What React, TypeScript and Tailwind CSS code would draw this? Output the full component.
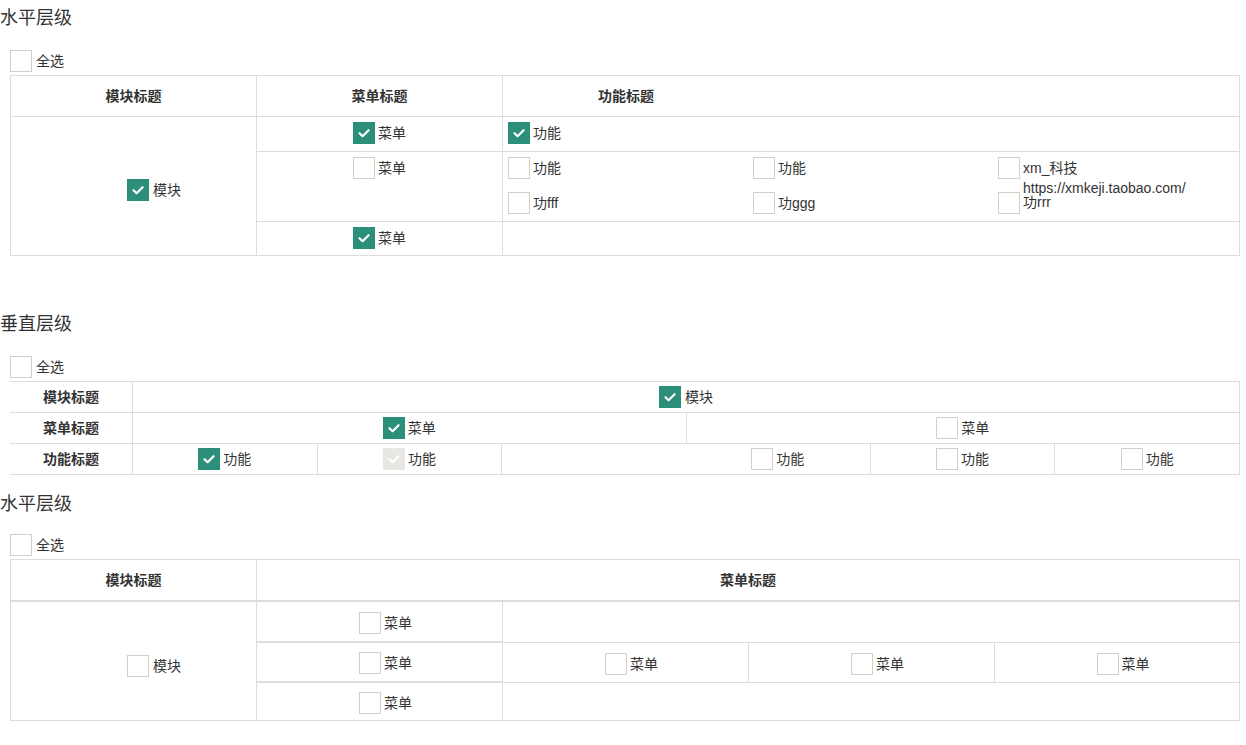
import React from "react";

type CheckState = "on" | "off" | "disabled";

const Box: React.FC<{ state: CheckState }> = ({ state }) => {
	if (state === "off") {
		return <span className="block w-[22px] h-[22px] shrink-0 border border-[#d3cec6] bg-white" />;
	}
	return (
		<span
			className={
				state === "on"
					? "flex items-center justify-center w-[22px] h-[22px] shrink-0 bg-[#2c8f7a]"
					: "flex items-center justify-center w-[22px] h-[22px] shrink-0 bg-[#e9e7e3]"
			}
		>
			<svg width="22" height="22" viewBox="0 0 22 22" fill="none">
				<polyline
					points="6.5,11.2 9.6,14.2 15.6,8.2"
					stroke="#ffffff"
					strokeWidth="2.2"
					strokeLinecap="round"
					strokeLinejoin="round"
				/>
			</svg>
		</span>
	);
};

const Check: React.FC<{ state?: CheckState; label: React.ReactNode; gap?: string }> = ({
	state = "off",
	label,
	gap = "gap-[3px]",
}) => (
	<label className={`flex items-center ${gap}`}>
		<Box state={state} />
		<span className="leading-[22px] whitespace-nowrap">{label}</span>
	</label>
);

const Title: React.FC<{ text: string; className?: string }> = ({ text, className = "" }) => (
	<div className={`h-[36px] flex items-center text-[18px] text-[#333] ${className}`}>{text}</div>
);

const SelectAll: React.FC<{ className?: string }> = ({ className = "" }) => (
	<div className={`pl-[10px] h-[22px] flex ${className}`}>
		<Check label="全选" gap="gap-[4px]" />
	</div>
);

// 水平层级：模块 / 菜单 / 功能
const HorizontalTable: React.FC = () => (
	<div className="ml-[10px] mt-[3px] w-[1230px] border border-[#ddd]">
		<div className="flex h-[41px] border-b border-[#ddd] font-bold">
			<div className="w-[246px] border-r border-[#ddd] flex items-center justify-center">模块标题</div>
			<div className="w-[246px] border-r border-[#ddd] flex items-center justify-center">菜单标题</div>
			<div className="w-[246px] flex items-center justify-center">功能标题</div>
		</div>
		<div className="flex">
			<div className="w-[246px] border-r border-[#ddd] flex items-center pl-[116px] pt-[8px]">
				<Check state="on" label="模块" gap="gap-[4px]" />
			</div>
			<div className="flex-1 flex flex-col">
				<div className="flex h-[35px] border-b border-[#ddd]">
					<div className="w-[246px] border-r border-[#ddd] flex items-start justify-center pt-[5px]">
						<Check state="on" label="菜单" />
					</div>
					<div className="flex-1 flex items-start pl-[5px] pt-[5px]">
						<Check state="on" label="功能" />
					</div>
				</div>
				<div className="flex h-[70px] border-b border-[#ddd]">
					<div className="w-[246px] border-r border-[#ddd] flex items-start justify-center pt-[5px]">
						<Check label="菜单" />
					</div>
					<div className="flex-1 grid grid-cols-[245px_245px_245px] auto-rows-[35px]">
						<div className="flex items-start pl-[5px] pt-[5px]"><Check label="功能" /></div>
						<div className="flex items-start pl-[5px] pt-[5px]"><Check label="功能" /></div>
						<div className="flex items-start pl-[5px] pt-[5px]"><Check label="xm_科技" /></div>
						<div className="flex items-start pl-[5px] pt-[5px]"><Check label="功fff" /></div>
						<div className="flex items-start pl-[5px] pt-[5px]"><Check label="功ggg" /></div>
						<div className="pl-[5px] pt-[5px] flex items-start gap-[3px]">
							<Box state="off" />
							<span className="-mt-[11px] leading-[14px]">
								https://xmkeji.taobao.com/
								<br />
								功rrr
							</span>
						</div>
					</div>
				</div>
				<div className="flex h-[33px]">
					<div className="w-[246px] border-r border-[#ddd] flex items-start justify-center pt-[5px]">
						<Check state="on" label="菜单" />
					</div>
					<div className="flex-1" />
				</div>
			</div>
		</div>
	</div>
);

const Cell: React.FC<{ children?: React.ReactNode; border?: boolean }> = ({ children, border = true }) => (
	<div className={`flex-1 flex items-center justify-center ${border ? "border-r border-[#ddd]" : ""}`}>
		{children}
	</div>
);

// 垂直层级：每一级一行
const VerticalTable: React.FC = () => (
	<div className="ml-[10px] mt-[3px] w-[1230px] border-t border-r border-[#ddd]">
		<div className="flex h-[31px] border-b border-[#ddd]">
			<div className="w-[123px] border-r border-[#ddd] flex items-center justify-center font-bold">模块标题</div>
			<Cell border={false}>
				<Check state="on" label="模块" gap="gap-[4px]" />
			</Cell>
		</div>
		<div className="flex h-[31px] border-b border-[#ddd]">
			<div className="w-[123px] border-r border-[#ddd] flex items-center justify-center font-bold">菜单标题</div>
			<Cell>
				<Check state="on" label="菜单" />
			</Cell>
			<Cell border={false}>
				<Check label="菜单" />
			</Cell>
		</div>
		<div className="flex h-[31px] border-b border-[#ddd]">
			<div className="w-[123px] border-r border-[#ddd] flex items-center justify-center font-bold">功能标题</div>
			<Cell>
				<Check state="on" label="功能" />
			</Cell>
			<Cell>
				<Check state="disabled" label="功能" />
			</Cell>
			<Cell border={false} />
			<Cell>
				<Check label="功能" />
			</Cell>
			<Cell>
				<Check label="功能" />
			</Cell>
			<Cell border={false}>
				<Check label="功能" />
			</Cell>
		</div>
	</div>
);

// 水平层级：模块 / 菜单（菜单横向展开）
const MenuTable: React.FC = () => (
	<div className="ml-[10px] mt-[3px] w-[1230px] border border-[#ddd]">
		<div className="flex h-[42px] border-b-2 border-[#ddd] font-bold">
			<div className="w-[246px] border-r border-[#ddd] flex items-center justify-center">模块标题</div>
			<div className="flex-1 flex items-center justify-center">菜单标题</div>
		</div>
		<div className="flex">
			<div className="w-[246px] border-r border-[#ddd] flex items-center pl-[116px] pt-[10px]">
				<Check label="模块" gap="gap-[4px]" />
			</div>
			<div className="flex-1 flex flex-col">
				<div className="flex h-[41px]">
					<div className="w-[246px] border-r border-b-2 border-[#ddd] flex items-center justify-center pl-[12px] pt-[2px]">
						<Check label="菜单" />
					</div>
					<div className="flex-1 border-b border-[#ddd]" />
				</div>
				<div className="flex h-[40px]">
					<div className="w-[246px] border-r border-b-2 border-[#ddd] flex items-center justify-center pl-[12px] pt-[2px]">
						<Check label="菜单" />
					</div>
					<div className="flex-1 flex border-b border-[#ddd]">
						<div className="w-[246px] border-r border-[#ddd] flex items-center justify-center pl-[12px] pt-[2px]">
							<Check label="菜单" />
						</div>
						<div className="w-[246px] border-r border-[#ddd] flex items-center justify-center pl-[12px] pt-[2px]">
							<Check label="菜单" />
						</div>
						<div className="flex-1 flex items-center justify-center pl-[12px] pt-[2px]">
							<Check label="菜单" />
						</div>
					</div>
				</div>
				<div className="flex h-[37px]">
					<div className="w-[246px] border-r border-[#ddd] flex items-center justify-center pl-[12px] pt-[2px]">
						<Check label="菜单" />
					</div>
					<div className="flex-1" />
				</div>
			</div>
		</div>
	</div>
);

export default function App() {
	return (
		<div className="w-[1246px] min-h-[745px] bg-white text-[14px] text-[#333] font-['Liberation_Sans','Noto_Sans_CJK_SC',sans-serif]">
			<Title text="水平层级" />
			<SelectAll className="mt-[14px]" />
			<HorizontalTable />

			<Title text="垂直层级" className="mt-[50px]" />
			<SelectAll className="mt-[14px]" />
			<VerticalTable />

			<Title text="水平层级" className="mt-[11px]" />
			<SelectAll className="mt-[12px]" />
			<MenuTable />
		</div>
	);
}
